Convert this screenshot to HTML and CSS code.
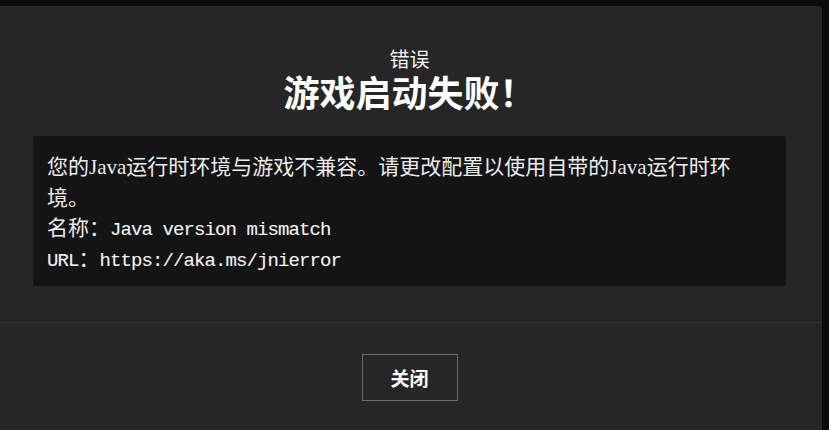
FILE: index.html
```html
<!DOCTYPE html>
<html lang="zh-CN">
<head>
<meta charset="utf-8">
<title>错误</title>
<link rel="stylesheet" href="styles.css">
</head>
<body>
<div class="dialog">
  <div class="head">
    <div class="subtitle">错误</div>
    <div class="title">游戏启动失败！</div>
  </div>
  <div class="message">
    <p class="line">您的<span class="serif">Java</span>运行时环境与游戏不兼容。请更改配置以使用自带的<span class="serif">Java</span>运行时环境。</p>
    <p class="line">名称：<span class="mono">Java version mismatch</span></p>
    <p class="line"><span class="mono">URL</span>：<span class="mono">https://aka.ms/jnierror</span></p>
  </div>
  <div class="footer">
    <button class="btn" type="button">关闭</button>
  </div>
</div>
</body>
</html>
```
FILE: styles.css
```css
html, body {
  margin: 0;
  padding: 0;
  height: 100%;
  background: #0b0b0b;
  overflow: hidden;
}
body {
  font-family: "Noto Sans CJK SC", "Noto Sans", sans-serif;
  color: #ffffff;
}
.dialog {
  margin: 6px 0 0 -3px;
  width: 825px;
  min-height: 440px;
  background: #262626;
  border-radius: 4px 4px 0 0;
}
.head {
  padding-top: 41px;
  text-align: center;
}
.subtitle {
  font-size: 20px;
  line-height: 24px;
  color: #f2f2f2;
}
.title {
  font-size: 36px;
  font-weight: 700;
  line-height: 40px;
}
.message {
  margin: 25px 36px 0 36px;
  padding: 14px 50px 14px 14px;
  background: #141414;
  border-radius: 3px;
  font-size: 21px;
  line-height: 30.5px;
  color: #ececec;
}
.line {
  margin: 0;
}
.serif {
  font-family: "Liberation Serif", serif;
  line-height: 1;
}
.mono {
  font-family: "Liberation Mono", monospace;
  font-size: 19px;
  letter-spacing: -0.9px;
  line-height: 1;
  color: #f2f2f2;
  -webkit-text-stroke: 0.1px #f2f2f2;
}
.footer {
  margin-top: 36px;
  border-top: 1px solid #353535;
  padding-top: 31px;
  display: flex;
  justify-content: center;
}
.btn {
  width: 96px;
  height: 47px;
  background: transparent;
  border: 1px solid #6b6b6b;
  color: #ffffff;
  font-family: "Noto Sans CJK SC", sans-serif;
  font-size: 19px;
  font-weight: 700;
  padding: 0;
}
```
